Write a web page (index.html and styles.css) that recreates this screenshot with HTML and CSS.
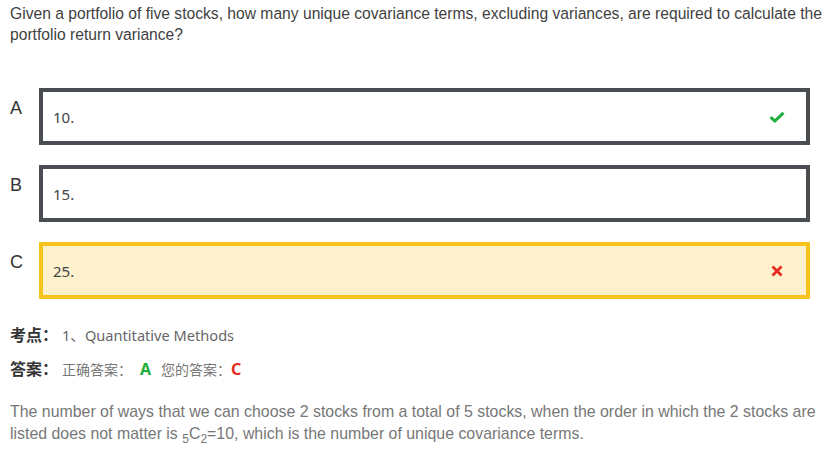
FILE: index.html
```html
<!DOCTYPE html>
<html lang="zh">
<head>
<meta charset="utf-8">
<title>Question</title>
<link rel="stylesheet" href="styles.css">
</head>
<body>
<div class="page">
  <p class="question">Given a portfolio of five stocks, how many unique covariance terms, excluding variances, are required to calculate the portfolio return variance?</p>

  <div class="options">
    <div class="option">
      <div class="letter">A</div>
      <div class="box">
        <span class="text">10.</span>
        <svg class="icon" width="16" height="12" viewBox="0 0 16 12"><path d="M1.5 6.2 L5.8 10 L14.5 1.8" fill="none" stroke="#1fae3c" stroke-width="3" stroke-linejoin="miter"/></svg>
      </div>
    </div>
    <div class="option">
      <div class="letter">B</div>
      <div class="box">
        <span class="text">15.</span>
      </div>
    </div>
    <div class="option">
      <div class="letter">C</div>
      <div class="box wrong">
        <span class="text">25.</span>
        <svg class="icon" width="16" height="12" viewBox="0 0 16 12"><path d="M3.5 1.5 L12.5 10.5 M12.5 1.5 L3.5 10.5" fill="none" stroke="#e82a1e" stroke-width="2.8"/></svg>
      </div>
    </div>
  </div>

  <div class="meta">
    <div class="meta-row"><span class="label">考点：</span><span class="value">1、Quantitative Methods</span></div>
    <div class="meta-row"><span class="label">答案：</span><span class="small">正确答案：</span><span class="correct">A</span><span class="small mine">您的答案：</span><span class="incorrect">C</span></div>
  </div>

  <p class="explain">The number of ways that we can choose 2 stocks from a total of 5 stocks, when the order in which the 2 stocks are listed does not matter is <sub>5</sub>C<sub>2</sub>=10, which is the number of unique covariance terms.</p>
</div>
</body>
</html>
```

FILE: styles.css
```css
html, body {
  margin: 0;
  padding: 0;
  background: #ffffff;
}

.page {
  padding: 3px 0 0 10px;
  font-family: "Liberation Sans", Arial, "Noto Sans CJK SC", sans-serif;
}

.question {
  margin: 0;
  font-size: 15.65px;
  line-height: 21px;
  color: #3f3f3f;
}

.options {
  margin-top: 43px;
  display: flex;
  flex-direction: column;
  gap: 20px;
  margin-right: 19px;
}

.option {
  display: flex;
  align-items: flex-start;
}

.letter {
  width: 29px;
  flex: none;
  padding-top: 10px;
  font-family: "Liberation Sans", sans-serif;
  font-size: 18px;
  line-height: 20px;
  color: #333;
}

.box {
  flex: 1;
  height: 49px;
  border: 4px solid #4a4e52;
  display: flex;
  align-items: center;
  justify-content: space-between;
  padding: 0 21px 0 10px;
  background: #fff;
}

.box.wrong {
  border-color: #f6c21c;
  background: #fdf1cd;
}

.text {
  font-family: "Noto Sans", "Liberation Sans", sans-serif;
  font-size: 15px;
  color: #444;
}

.icon {
  display: block;
}

.meta {
  margin-top: 23px;
  display: flex;
  flex-direction: column;
  gap: 10px;
}

.meta-row {
  display: flex;
  align-items: baseline;
  height: 24px;
  line-height: 24px;
}

.label {
  font-family: "Noto Sans CJK SC", sans-serif;
  font-weight: 700;
  font-size: 16px;
  color: #333;
  margin-right: 4px;
}

.value {
  font-family: "Noto Sans", "Noto Sans CJK SC", sans-serif;
  font-size: 14.6px;
  color: #666;
}

.small {
  font-family: "Noto Sans CJK SC", sans-serif;
  font-size: 14px;
  color: #777;
}

.mine {
  margin-left: 10px;
}

.correct {
  font-family: "Noto Sans", sans-serif;
  font-weight: 700;
  font-size: 16px;
  color: #1fae3c;
  margin-left: 8px;
}

.incorrect {
  font-family: "Noto Sans", sans-serif;
  font-weight: 700;
  font-size: 16px;
  color: #e82a1e;
}

.explain {
  margin: 21px 10px 0 0;
  font-size: 15.9px;
  line-height: 22px;
  color: #777;
}

.explain sub {
  font-size: 12px;
  vertical-align: -4px;
  line-height: 1;
}
```
